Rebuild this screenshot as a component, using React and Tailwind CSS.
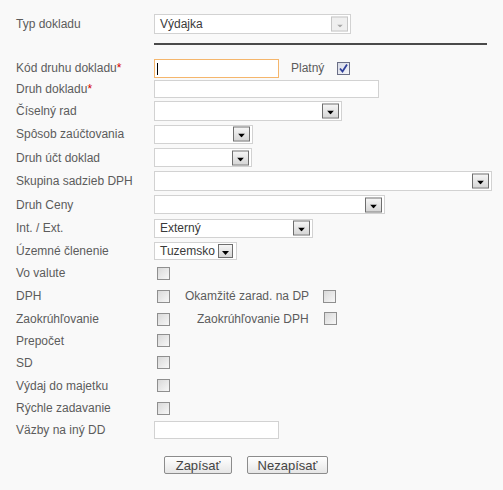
import React from "react";

// small pieces of the old-school form
function Arrow({ disabled, small }) {
  return (
    <span
      className={`absolute top-1/2 -translate-y-1/2 flex items-center justify-center border ${
        small ? "right-[3px] w-[15px] h-[14px]" : "right-[2px] w-[17px] h-[15px]"
      } ${
        disabled
          ? "border-[#c6c6c6] bg-[#efefef]"
          : "border-[#6e6e6e] bg-linear-to-b from-[#f6f6f6] to-[#d6d6d6]"
      }`}
    >
      <svg width={disabled ? 6 : 7} height={disabled ? 3 : 4} className="mt-[3px]">
        {disabled ? (
          <polygon points="0,0 6,0 3,3" fill="#a8a8a8" />
        ) : (
          <polygon points="0,0 7,0 3.5,4" fill="#000" />
        )}
      </svg>
    </span>
  );
}

function Select({ cls, value, disabled, small }) {
  return (
    <div className={`relative bg-white border border-[#d2d2d2] text-[#3a3a3a] flex items-center pl-[5px] ${cls}`}>
      {value}
      <Arrow disabled={disabled} small={small} />
    </div>
  );
}

function Check({ checked }) {
  return (
    <span
      className={`relative inline-block w-[13px] h-[13px] border shrink-0 ${
        checked
          ? "border-[#6b6f86] bg-linear-to-br from-[#d8dbe6] to-[#f4f5f9]"
          : "border-[#8f8f8f] bg-linear-to-br from-[#d9d9d9] to-[#f7f7f7]"
      }`}
    >
      {checked && (
        <svg width="11" height="11" className="absolute left-[0px] top-[0px]">
          <path d="M2 5.5 L4.5 8.5 L9 1.5" stroke="#2f3f9a" strokeWidth="1.8" fill="none" />
        </svg>
      )}
    </span>
  );
}

function Row({ h, label, req, children }) {
  return (
    <div className={`flex items-center ${h}`}>
      <div className="w-[138px] shrink-0">
        {label}
        {req && <span className="text-[#d40000]">*</span>}
      </div>
      {children}
    </div>
  );
}

export default function App() {
  return (
    <div className="min-h-screen bg-[#f9f9f9] text-[12px] text-[#5c5c5c] font-['Liberation_Sans',Arial,sans-serif]">
      <div className="pt-[14px] pl-[16px] w-[503px]">
        {/* TYP DOKLADU */}
        <Row h="h-[20px]" label="Typ dokladu">
          <Select cls="w-[197px] h-[20px]" value="Výdajka" disabled />
        </Row>
        <div className="ml-[138px] mt-[9px] w-[333px] h-[2px] bg-[#4a4a4a]" />

        <div className="mt-[13px]">
          <Row h="h-[20px]" label="Kód druhu dokladu" req>
            <div className="relative w-[125px] h-[19px] bg-white border border-[#f5b66c]">
              <span className="absolute left-[2px] top-[3px] w-px h-[12px] bg-black" />
            </div>
            <span className="ml-[12px] w-[46px]">Platný</span>
            <Check checked />
          </Row>
          <Row h="h-[22px]" label="Druh dokladu" req>
            <div className="w-[225px] h-[18px] bg-white border border-[#d2d2d2]" />
          </Row>
          <Row h="h-[22px]" label="Číselný rad">
            <Select cls="w-[188px] h-[20px]" />
          </Row>
          <Row h="h-[24px]" label="Spôsob zaúčtovania">
            <Select cls="w-[99px] h-[19px]" />
          </Row>
          <Row h="h-[23px]" label="Druh účt doklad">
            <Select cls="w-[98px] h-[19px]" />
          </Row>
          <Row h="h-[24px]" label="Skupina sadzieb DPH">
            <Select cls="w-[338px] h-[20px]" />
          </Row>
          <Row h="h-[23px]" label="Druh Ceny">
            <Select cls="w-[231px] h-[19px]" />
          </Row>
          <Row h="h-[24px]" label="Int. / Ext.">
            <Select cls="w-[159px] h-[19px]" value="Externý" />
          </Row>
          <Row h="h-[22px]" label="Územné členenie">
            <Select cls="w-[83px] h-[18px]" value="Tuzemsko" small />
          </Row>
          <Row h="h-[22px]" label="Vo valute">
            <span className="ml-[3px] flex"><Check /></span>
          </Row>
          <Row h="h-[24px]" label="DPH">
            <span className="ml-[3px] flex"><Check /></span>
            <span className="ml-[15px] w-[138px]">Okamžité zarad. na DP</span>
            <Check />
          </Row>
          <Row h="h-[22px]" label="Zaokrúhľovanie">
            <span className="ml-[3px] flex"><Check /></span>
            <span className="ml-[27px] w-[127px]">Zaokrúhľovanie DPH</span>
            <span className="-mt-[2px] flex"><Check /></span>
          </Row>
          <Row h="h-[21px]" label="Prepočet">
            <span className="ml-[3px] flex"><Check /></span>
          </Row>
          <Row h="h-[23px]" label="SD">
            <span className="ml-[3px] flex"><Check /></span>
          </Row>
          <Row h="h-[23px]" label="Výdaj do majetku">
            <span className="ml-[3px] flex"><Check /></span>
          </Row>
          <Row h="h-[22px]" label="Rýchle zadavanie">
            <span className="ml-[3px] flex"><Check /></span>
          </Row>
          <Row h="h-[22px]" label="Väzby na iný DD">
            <div className="w-[125px] h-[18px] bg-white border border-[#d2d2d2]" />
          </Row>
        </div>

        {/* BUTTONS */}
        <div className="flex mt-[15px] ml-[148px] gap-[15px]">
          <button className="w-[68px] h-[18px] rounded-[2px] border border-[#8c8c8c] bg-linear-to-b from-white to-[#e6e6e6] text-[#444] text-[13px] leading-none">
            Zapísať
          </button>
          <button className="w-[81px] h-[18px] rounded-[2px] border border-[#8c8c8c] bg-linear-to-b from-white to-[#e6e6e6] text-[#444] text-[13px] leading-none">
            Nezapísať
          </button>
        </div>
      </div>
    </div>
  );
}
